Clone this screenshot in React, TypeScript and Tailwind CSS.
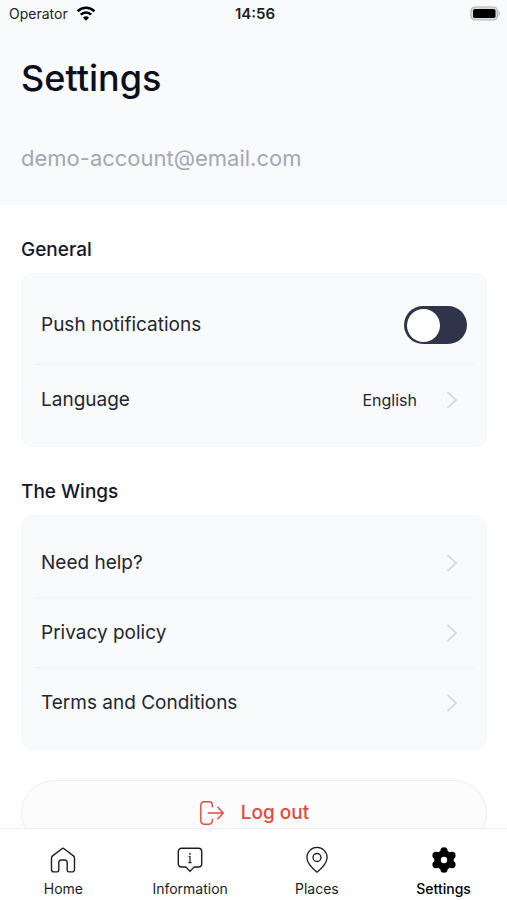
import { useState, type ReactNode } from "react";

function WifiIcon() {
  return (
    <svg width="20" height="16" viewBox="0 0 20 16" fill="none" stroke="#000" strokeWidth="2.6" aria-hidden="true">
      <path d="M1.6 5.2a12 12 0 0 1 16.8 0" />
      <path d="M4.8 8.7a7.4 7.4 0 0 1 10.4 0" />
      <path d="M10 14.8 7 11.7a4.3 4.3 0 0 1 6 0z" fill="#000" stroke="none" />
    </svg>
  );
}

function BatteryIcon() {
  return (
    <svg width="31" height="16" viewBox="0 0 31 16" aria-hidden="true">
      <rect x="1" y="1" width="26.5" height="13" rx="4" fill="#dcdcdc" stroke="#b4b4b4" strokeWidth="1.2" />
      <rect x="3" y="3" width="22.5" height="9" rx="1.8" fill="#000" />
      <path d="M28.7 5.3c1.8.5 1.8 3.9 0 4.4z" fill="#b4b4b4" />
    </svg>
  );
}

function Chevron() {
  return (
    <svg width="24" height="24" viewBox="0 0 24 24" fill="none" stroke="#d9dadb" strokeWidth="1.8" aria-hidden="true">
      <path d="m4.5 4 8.5 8-8.5 8" />
    </svg>
  );
}

function LogoutIcon() {
  return (
    <svg width="26" height="26" viewBox="0 0 26 26" fill="none" stroke="#e5483d" strokeWidth="1.4" strokeLinecap="round" strokeLinejoin="round" aria-hidden="true">
      <path d="M13.3 6.8V4.9a3.2 3.2 0 0 0-3.2-3.2H5A3.2 3.2 0 0 0 1.8 4.9v16.2A3.2 3.2 0 0 0 5 24.3h5.1a3.2 3.2 0 0 0 3.2-3.2v-1.9" />
      <path d="M9.3 13h15M18.8 7.2l5.5 5.8-5.5 5.8" />
    </svg>
  );
}

function HomeIcon() {
  return (
    <svg width="28" height="28" viewBox="0 0 28 28" fill="none" stroke="#1c1c1e" strokeWidth="1.4" strokeLinejoin="round" aria-hidden="true">
      <path d="M12.9 2.7a1.7 1.7 0 0 1 2.2 0l9.3 7.2c.7.6 1.1 1.3 1.1 2.2v11.4a2.4 2.4 0 0 1-2.4 2.4h-3.3a1.6 1.6 0 0 1-1.6-1.6v-8.1a2.2 2.2 0 0 0-2.2-2.2h-4a2.2 2.2 0 0 0-2.2 2.2v8.1a1.6 1.6 0 0 1-1.6 1.6H4.9a2.4 2.4 0 0 1-2.4-2.4V12.1c0-.9.4-1.6 1.1-2.2z" />
    </svg>
  );
}

function InfoIcon() {
  return (
    <svg width="28" height="28" viewBox="0 0 28 28" fill="none" stroke="#1c1c1e" strokeWidth="1.4" strokeLinejoin="round" aria-hidden="true">
      <path d="M5.5 2.2h17a3.2 3.2 0 0 1 3.2 3.2v12.4a3.2 3.2 0 0 1-3.2 3.2h-3.6c-.6 0-1 .2-1.4.6L14 25.4l-3.5-3.8c-.4-.4-.8-.6-1.4-.6H5.5a3.2 3.2 0 0 1-3.2-3.2V5.4a3.2 3.2 0 0 1 3.2-3.2z" />
      <path d="M12.6 10.5H14v6.2M12.4 16.7h3.2" strokeWidth="1.2" />
      <circle cx="13.9" cy="7.8" r=".9" fill="#1c1c1e" stroke="none" />
    </svg>
  );
}

function PinIcon() {
  return (
    <svg width="28" height="28" viewBox="0 0 28 28" fill="none" stroke="#1c1c1e" strokeWidth="1.3" strokeLinejoin="round" aria-hidden="true">
      <path d="M14 26.2C9.5 22.5 3.9 17.2 3.9 11.5a10.1 10.1 0 0 1 20.2 0c0 5.700-5.6 11-10.1 14.7z" />
      <circle cx="14" cy="11.5" r="4" />
    </svg>
  );
}

function GearIcon() {
  return (
    <svg width="28" height="28" viewBox="0 0 28 28" aria-hidden="true">
      <circle cx="14" cy="14" r="9.8" />
      <circle cx="14" cy="4.8" r="3.6" />
      <circle cx="14" cy="23.2" r="3.6" />
      <circle cx="22" cy="9.4" r="3.6" />
      <circle cx="22" cy="18.6" r="3.6" />
      <circle cx="6" cy="9.4" r="3.6" />
      <circle cx="6" cy="18.6" r="3.6" />
      <circle cx="14" cy="14" r="3.2" fill="#fff" />
    </svg>
  );
}

function Section({ title, children }: { title: string; children: ReactNode }) {
  return (
    <section>
      <h2 className="mb-2 font-medium text-[#14172a]">{title}</h2>
      <div className="rounded-xl border border-[#f6f7f9] bg-[#f9fafc] px-3 pt-3 pb-[11px] divide-y divide-[#f0f2f4]">{children}</div>
    </section>
  );
}

function LinkRow({ label, value }: { label: string; value?: string }) {
  return (
    <a href="#" className="flex h-[70px] items-center px-[7px]">
      <span className="flex-1">{label}</span>
      {value && <span className="mr-[26px] text-base">{value}</span>}
      <Chevron />
    </a>
  );
}

const tabs = [
  { label: "Home", icon: <HomeIcon /> },
  { label: "Information", icon: <InfoIcon /> },
  { label: "Places", icon: <PinIcon /> },
  { label: "Settings", icon: <GearIcon />, active: true },
];

export default function App() {
  const [push, setPush] = useState(false);

  return (
    <div className="flex h-screen flex-col bg-white font-['Inter',sans-serif] text-[19px] leading-[30px] text-[#23262f]">
      <div className="grid h-7 shrink-0 grid-cols-3 items-center bg-[#f9fafc] pl-[9px] pr-1.5 text-sm text-[#1c1c1e]">
        <div className="flex items-center gap-2">
          <span>Operator</span>
          <WifiIcon />
        </div>
        <span className="text-center text-[15px] font-semibold">14:56</span>
        <div className="flex justify-end">
          <BatteryIcon />
        </div>
      </div>

      <div className="min-h-0 flex-1 overflow-hidden">
        <header className="bg-[#f9fafc] pt-[26px] pr-5 pb-[33px] pl-[21px]">
          <h1 className="text-4xl leading-[48px] font-medium text-[#0b0e20]">Settings</h1>
          <p className="mt-[42px] text-[22px] leading-7 text-[#a4a8b1]">demo-account@email.com</p>
        </header>

        <main className="flex flex-col gap-[30px] py-[30px] pr-5 pl-[21px]">
          <Section title="General">
            <label className="flex h-[79px] items-center px-[7px]">
              <span className="flex-1">Push notifications</span>
              <input
                type="checkbox"
                role="switch"
                checked={push}
                onChange={(e) => setPush(e.target.checked)}
                className="flex h-[38px] w-[63px] appearance-none items-center rounded-full bg-[#2f344b] px-[3px] before:size-[33px] before:rounded-full before:bg-white checked:justify-end"
              />
            </label>
            <LinkRow label="Language" value="English" />
          </Section>

          <Section title="The Wings">
            <LinkRow label="Need help?" />
            <LinkRow label="Privacy policy" />
            <LinkRow label="Terms and Conditions" />
          </Section>

          <button className="flex h-[66px] w-full shrink-0 items-center justify-center gap-4 rounded-full border border-[#efefef] bg-[#fcfcfc] font-medium text-[#e5483d]">
            <LogoutIcon />
            Log out
          </button>
        </main>
      </div>

      <nav className="grid h-[72px] shrink-0 grid-cols-4 border-t border-[#f0f0f0] bg-white text-sm text-[#1c1c1e]">
        {tabs.map((tab) => (
          <a
            key={tab.label}
            href="#"
            aria-current={tab.active ? "page" : undefined}
            className={tab.active ? "flex flex-col items-center gap-[5px] pt-[17px] font-medium text-black" : "flex flex-col items-center gap-[5px] pt-[17px]"}
          >
            {tab.icon}
            <span>{tab.label}</span>
          </a>
        ))}
      </nav>
    </div>
  );
}
